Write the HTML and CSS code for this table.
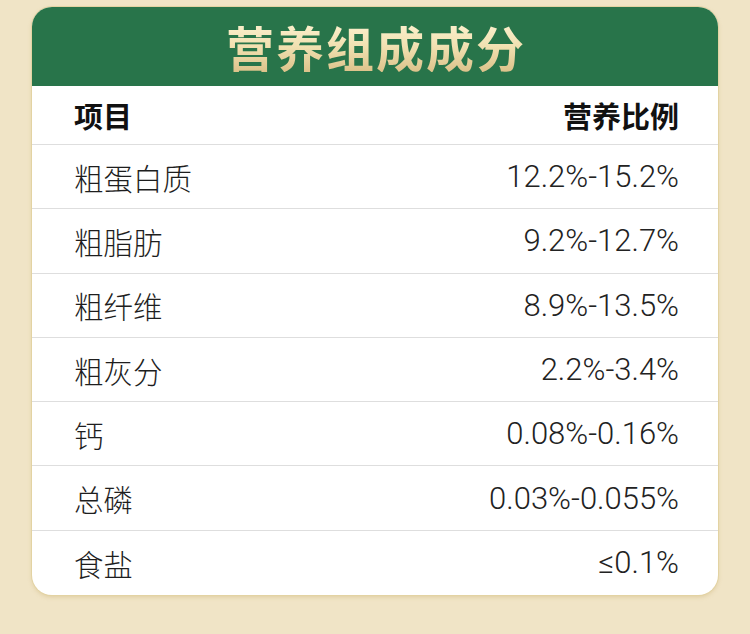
FILE: index.html
```html
<!DOCTYPE html>
<html lang="zh-CN">
<head>
<meta charset="utf-8">
<title>营养组成成分</title>
<link rel="stylesheet" href="styles.css">
</head>
<body>
<div class="card">
  <div class="banner"><h1 class="title">营养组成成分</h1></div>
  <div class="table">
    <div class="row head"><span>项目</span><span>营养比例</span></div>
    <div class="row"><span>粗蛋白质</span><span class="val">12.2%-15.2%</span></div>
    <div class="row"><span>粗脂肪</span><span class="val">9.2%-12.7%</span></div>
    <div class="row"><span>粗纤维</span><span class="val">8.9%-13.5%</span></div>
    <div class="row"><span>粗灰分</span><span class="val">2.2%-3.4%</span></div>
    <div class="row"><span>钙</span><span class="val">0.08%-0.16%</span></div>
    <div class="row"><span>总磷</span><span class="val">0.03%-0.055%</span></div>
    <div class="row last"><span>食盐</span><span class="val">≤0.1%</span></div>
  </div>
</div>
</body>
</html>
```

FILE: styles.css
```css
html, body {
  margin: 0;
  padding: 0;
}
body {
  width: 750px;
  height: 634px;
  background: #f0e4c6;
  font-family: "Noto Sans CJK SC", "Noto Sans", sans-serif;
  padding-top: 7px;
  box-sizing: border-box;
}
.card {
  margin-left: 32px;
  width: 686px;
  border-radius: 20px;
  background: #ffffff;
  overflow: hidden;
  box-shadow: 0 0 0 1px #e3d3a3, 0 2px 4px rgba(190, 160, 90, 0.35);
}
.banner {
  height: 79px;
  background: #28744a;
  display: flex;
  align-items: center;
  justify-content: center;
}
.title {
  margin: 0;
  font-size: 48px;
  font-weight: 700;
  letter-spacing: 2px;
  line-height: 1;
  background: linear-gradient(180deg, #fbf1cf 0%, #f0e0b0 50%, #dcc28a 100%);
  -webkit-background-clip: text;
  background-clip: text;
  color: transparent;
  padding-bottom: 2px;
  padding-left: 2px;
}
.table {
  display: flex;
  flex-direction: column;
}
.row {
  height: 64.3px;
  box-sizing: border-box;
  padding: 0 39px 0 42px;
  display: flex;
  align-items: center;
  justify-content: space-between;
  border-bottom: 1px solid #dedede;
  font-size: 29.5px;
  font-weight: 300;
  color: #1e1e1e;
}
.val {
  font-family: Roboto, "Noto Sans", sans-serif;
  font-size: 31px;
  font-weight: 300;
  color: #222;
}
.row.head {
  height: 59px;
  font-weight: 700;
  font-size: 29px;
  color: #111;
}
.row.last {
  border-bottom: none;
}
```
